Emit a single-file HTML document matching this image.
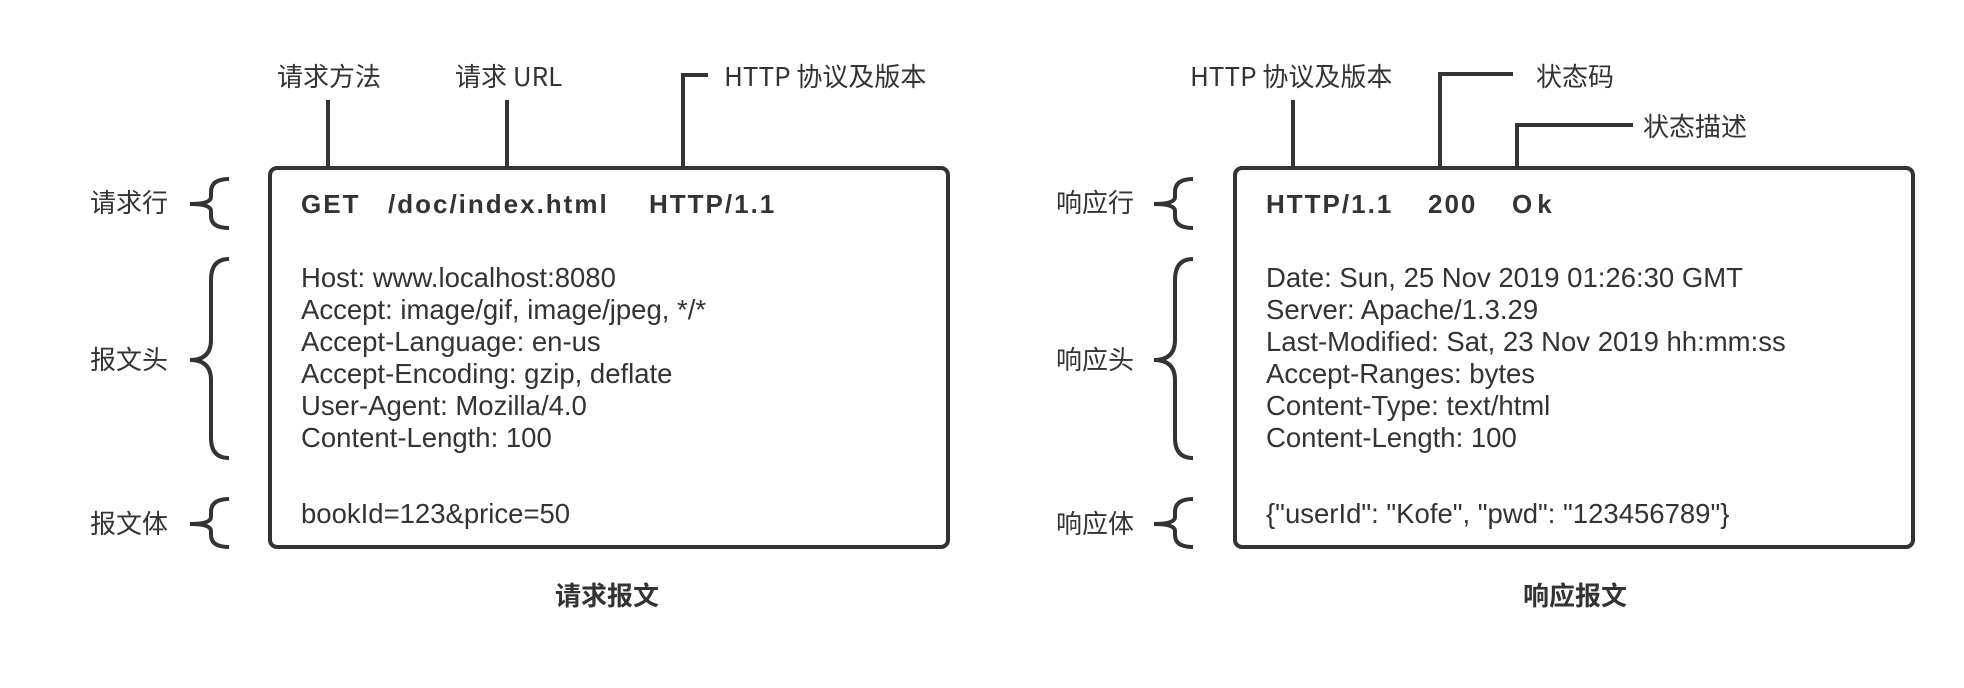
<!DOCTYPE html>
<html><head><meta charset="utf-8"><style>
html,body{margin:0;padding:0;background:#fff;}
body{width:1964px;height:688px;position:relative;overflow:hidden;font-family:"Liberation Sans","Noto Sans CJK SC",sans-serif;color:#333;}
.t{position:absolute;white-space:nowrap;font-size:27.5px;line-height:32px;}
.b{font-weight:bold;font-size:26px;letter-spacing:2px;}
.lab{position:absolute;white-space:nowrap;font-size:26px;line-height:30px;font-family:"Noto Sans CJK SC","Liberation Sans",sans-serif;}
.cap{font-weight:bold;font-size:26px;}
</style></head><body>
<svg width="1964" height="688" style="position:absolute;left:0;top:0" fill="none" stroke="#333" stroke-width="4">
<rect x="270" y="168" width="678" height="379" rx="7"/>
<rect x="1235" y="168" width="678" height="379" rx="7"/>
<path d="M328 100V168M507 100V168M683 168V75H708"/>
<path d="M1293 100V168M1440 168V74H1513M1517 168V125H1633"/>
<g id="br">
<path d="M229 179Q211 179 211 192V197Q211 204 190 204Q211 204 211 211V216Q211 228 229 228"/>
<path d="M229 259Q211 259 211 280V340Q211 360 190 360Q211 360 211 380V438Q211 458 229 458"/>
<path d="M229 499Q211 499 211 512V517Q211 524 190 524Q211 524 211 531V535Q211 547 229 547"/>
</g>
<use href="#br" x="964"/>
</svg>
<div class="lab" style="left:277px;top:61px">请求方法</div>
<div class="lab" style="left:455px;top:61px">请求 URL</div>
<div class="lab" style="left:724px;top:61px">HTTP 协议及版本</div>
<div class="lab" style="left:90px;top:187px">请求行</div>
<div class="lab" style="left:90px;top:344px">报文头</div>
<div class="lab" style="left:90px;top:508px">报文体</div>
<div class="lab cap" style="left:555px;top:580px">请求报文</div>
<div class="t b" style="left:301px;top:188px">GET</div>
<div class="t b" style="left:388px;top:188px">/doc/index.html</div>
<div class="t b" style="left:649px;top:188px">HTTP/1.1</div>
<div class="t" style="left:301px;top:262px">Host: www.localhost:8080<br>Accept: image/gif, image/jpeg, */*<br>Accept-Language: en-us<br>Accept-Encoding: gzip, deflate<br>User-Agent: Mozilla/4.0<br>Content-Length: 100</div>
<div class="t" style="left:301px;top:498px">bookId=123&amp;price=50</div>

<div class="lab" style="left:1190px;top:61px">HTTP 协议及版本</div>
<div class="lab" style="left:1536px;top:61px">状态码</div>
<div class="lab" style="left:1643px;top:111px">状态描述</div>
<div class="lab" style="left:1056px;top:187px">响应行</div>
<div class="lab" style="left:1056px;top:344px">响应头</div>
<div class="lab" style="left:1056px;top:508px">响应体</div>
<div class="lab cap" style="left:1523px;top:580px">响应报文</div>
<div class="t b" style="left:1266px;top:188px">HTTP/1.1</div>
<div class="t b" style="left:1428px;top:188px">200</div>
<div class="t b" style="left:1512px;top:188px;letter-spacing:5px">Ok</div>
<div class="t" style="left:1266px;top:262px">Date: Sun, 25 Nov 2019 01:26:30 GMT<br>Server: Apache/1.3.29<br>Last-Modified: Sat, 23 Nov 2019 hh:mm:ss<br>Accept-Ranges: bytes<br>Content-Type: text/html<br>Content-Length: 100</div>
<div class="t" style="left:1266px;top:498px">{"userId": "Kofe", "pwd": "123456789"}</div>
</body></html>
